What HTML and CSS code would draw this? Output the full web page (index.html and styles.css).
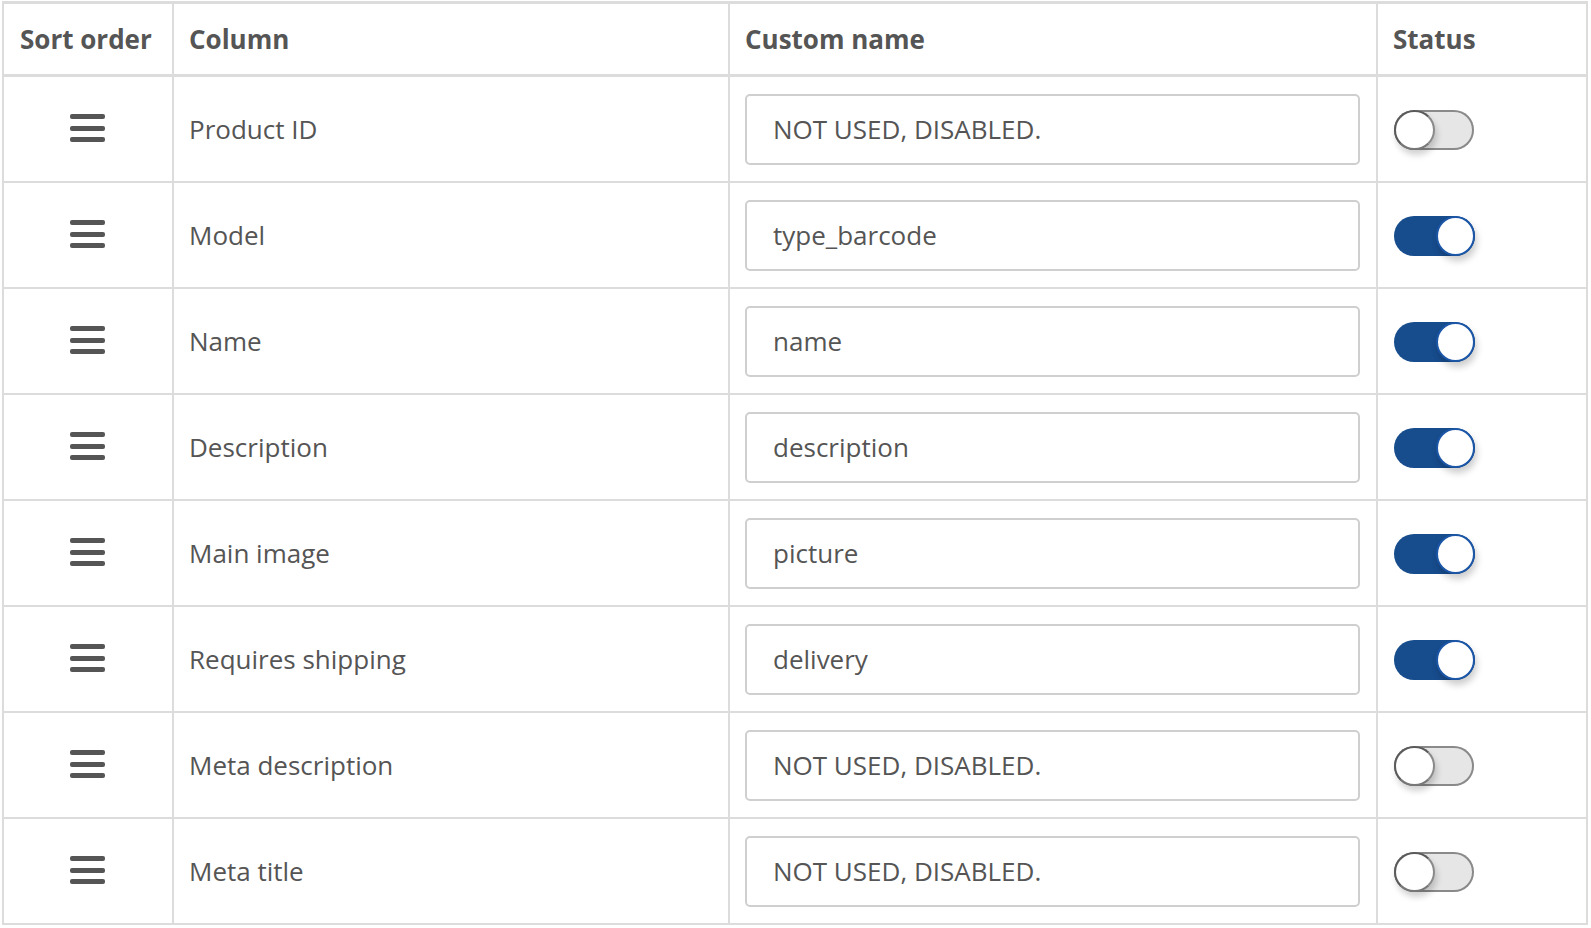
FILE: index.html
```html
<!DOCTYPE html>
<html lang="en">
<head>
<meta charset="utf-8">
<title>Columns</title>
<link rel="stylesheet" href="styles.css">
</head>
<body>
<div class="table">
  <div class="cell head c1">Sort order</div>
  <div class="cell head">Column</div>
  <div class="cell head">Custom name</div>
  <div class="cell head">Status</div>

  <div class="cell c1"><span class="grip"><i></i><i></i><i></i></span></div>
  <div class="cell">Product ID</div>
  <div class="cell field"><input class="input" type="text" value="NOT USED, DISABLED."></div>
  <div class="cell"><span class="toggle"><span class="knob"></span></span></div>

  <div class="cell c1"><span class="grip"><i></i><i></i><i></i></span></div>
  <div class="cell">Model</div>
  <div class="cell field"><input class="input" type="text" value="type_barcode"></div>
  <div class="cell"><span class="toggle on"><span class="knob"></span></span></div>

  <div class="cell c1"><span class="grip"><i></i><i></i><i></i></span></div>
  <div class="cell">Name</div>
  <div class="cell field"><input class="input" type="text" value="name"></div>
  <div class="cell"><span class="toggle on"><span class="knob"></span></span></div>

  <div class="cell c1"><span class="grip"><i></i><i></i><i></i></span></div>
  <div class="cell">Description</div>
  <div class="cell field"><input class="input" type="text" value="description"></div>
  <div class="cell"><span class="toggle on"><span class="knob"></span></span></div>

  <div class="cell c1"><span class="grip"><i></i><i></i><i></i></span></div>
  <div class="cell">Main image</div>
  <div class="cell field"><input class="input" type="text" value="picture"></div>
  <div class="cell"><span class="toggle on"><span class="knob"></span></span></div>

  <div class="cell c1"><span class="grip"><i></i><i></i><i></i></span></div>
  <div class="cell">Requires shipping</div>
  <div class="cell field"><input class="input" type="text" value="delivery"></div>
  <div class="cell"><span class="toggle on"><span class="knob"></span></span></div>

  <div class="cell c1"><span class="grip"><i></i><i></i><i></i></span></div>
  <div class="cell">Meta description</div>
  <div class="cell field"><input class="input" type="text" value="NOT USED, DISABLED."></div>
  <div class="cell"><span class="toggle"><span class="knob"></span></span></div>

  <div class="cell c1"><span class="grip"><i></i><i></i><i></i></span></div>
  <div class="cell">Meta title</div>
  <div class="cell field"><input class="input" type="text" value="NOT USED, DISABLED."></div>
  <div class="cell"><span class="toggle"><span class="knob"></span></span></div>
</div>
</body>
</html>
```

FILE: styles.css
```css
* { box-sizing: border-box; }

html, body {
  margin: 0;
  padding: 0;
  background: #fff;
  overflow: hidden;
}

body {
  font-family: "Open Sans", "Liberation Sans", sans-serif;
  font-size: 26px;
  color: #555;
  padding: 1px 0 0 2px;
}

.table {
  display: grid;
  grid-template-columns: 170px 556px 648px 210px;
  width: 1586px;
  border-left: 2px solid #dcdcdc;
  border-top: 3px solid #dcdcdc;
}

.cell {
  display: flex;
  align-items: center;
  height: 106px;
  padding: 0 15px;
  border-right: 2px solid #dcdcdc;
  border-bottom: 2px solid #dcdcdc;
  white-space: nowrap;
}

.cell.head {
  height: 73px;
  border-bottom-width: 3px;
  font-weight: 700;
}

.cell.c1 { padding-left: 16px; }

.cell.c1:not(.head) {
  justify-content: center;
  padding: 0 0 2px 0;
}

.grip {
  display: flex;
  flex-direction: column;
  gap: 6.5px;
  width: 35px;
  margin-left: -2px;
}

.grip i {
  display: block;
  height: 5px;
  border-radius: 2px;
  background: #555;
}

.field { padding: 0 16px 0 15px; }

.input {
  width: 100%;
  height: 71px;
  margin-top: 0;
  padding: 0 0 0 26px;
  border: 2px solid #cfcfcf;
  border-radius: 5px;
  background: #fff;
  font-family: "Open Sans", "Liberation Sans", sans-serif;
  font-size: 26px;
  color: #555;
  outline: none;
}

.toggle {
  position: relative;
  display: block;
  width: 80px;
  height: 40px;
  margin-top: 1px;
  margin-left: 1px;
  border-radius: 20px;
  background: #e6e6e6;
  box-shadow: inset 0 0 0 2px #8a8a8a;
}

.toggle .knob {
  position: absolute;
  top: 0;
  left: 0;
  width: 41px;
  height: 40px;
  border-radius: 50%;
  background: #fff;
  border: 2px solid #5a5a5a;
  border-right-color: #8a8a8a;
  border-bottom-color: #777;
  box-shadow: 2px 5px 6px rgba(0, 0, 0, 0.18);
}

.toggle.on {
  width: 81px;
  background: #174c8d;
  box-shadow: none;
}

.toggle.on .knob {
  left: auto;
  right: 0;
  width: 39px;
  height: 40px;
  border: 2px solid #1c56a6;
  box-shadow: 2px 5px 7px rgba(0, 0, 0, 0.2);
}
```
